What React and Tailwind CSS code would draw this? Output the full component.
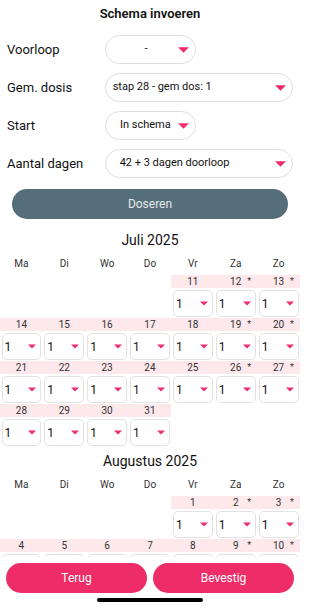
import React from "react";

const font = { fontFamily: "Roboto, 'Liberation Sans', sans-serif" };

function Caret({ w = 11, h = 6 }) {
  return (
    <svg width={w} height={h} viewBox="0 0 10 5" className="shrink-0">
      <polygon points="0,0 10,0 5,5" fill="#ef2d68" />
    </svg>
  );
}

function FieldSelect({ value, wide, align = "left", pl = "pl-[8px]" }) {
  return (
    <div
      className={`${wide ? "w-[189px]" : "w-[91px]"} h-[29px] rounded-[15px] border border-[#dedede] flex items-center pr-[6px] ${pl}`}
    >
      <span
        className={`flex-1 whitespace-nowrap text-[11px] text-[#111] ${align === "center" ? "text-center" : ""}`}
      >
        {value}
      </span>
      <Caret />
    </div>
  );
}

const weekdays = ["Ma", "Di", "Wo", "Do", "Vr", "Za", "Zo"];

function DayCell({ day, col }) {
  if (!day) return <div />;
  const weekend = col >= 5;
  return (
    <div className="flex flex-col">
      <div className="relative h-[13px] bg-[#fde8ec] flex items-center justify-center text-[10px] leading-none text-[#333]">
        {day}
        {weekend && (
          <span className="absolute right-[6px] top-[2px] text-[9px]">*</span>
        )}
      </div>
      <div className="mt-[2px] mx-[1.5px] h-[27px] rounded-[5px] border border-[#e2e2e2] flex items-center pl-[2px] pr-[4px]">
        <span className="flex-1 text-[12px] text-[#111]">1</span>
        <Caret w={8} h={5} />
      </div>
    </div>
  );
}

function Month({ title, offset, from, to, titleMt }) {
  const cells = [];
  for (let i = 0; i < offset; i++) cells.push(null);
  for (let d = from; d <= to; d++) cells.push(d);
  while (cells.length % 7) cells.push(null);
  const weeks = [];
  for (let i = 0; i < cells.length; i += 7) weeks.push(cells.slice(i, i + 7));
  return (
    <div>
      <div className={`${titleMt} text-center text-[14px] leading-[20px] text-[#111]`}>
        {title}
      </div>
      <div className="grid grid-cols-7 mt-[7px]">
        {weekdays.map((w) => (
          <div key={w} className="text-center text-[10px] leading-[14px] text-[#333]">
            {w}
          </div>
        ))}
      </div>
      <div className="mt-[4px] flex flex-col gap-[1px]">
        {weeks.map((wk, i) => (
          <div key={i} className="grid grid-cols-7">
            {wk.map((d, j) => (
              <DayCell key={j} day={d} col={j} />
            ))}
          </div>
        ))}
      </div>
    </div>
  );
}

export default function App() {
  return (
    <div className="relative w-[300px] h-[609px] overflow-hidden bg-white" style={font}>
      {/* Kop */}
      <div className="pt-[5px] text-center text-[13px] leading-[18px] font-semibold text-[#111]">
        Schema invoeren
      </div>

      {/* Invoervelden */}
      <div className="mt-[12px] px-[7px] flex flex-col gap-[9px]">
        <div className="flex items-center">
          <span className="w-[98px] text-[13px] text-[#111]">Voorloop</span>
          <FieldSelect value="-" align="center" />
        </div>
        <div className="flex items-center">
          <span className="w-[98px] text-[13px] text-[#111]">Gem. dosis</span>
          <FieldSelect value="stap 28 - gem dos: 1" wide pl="pl-[7px]" />
        </div>
        <div className="flex items-center">
          <span className="w-[98px] text-[13px] text-[#111]">Start</span>
          <FieldSelect value="In schema" pl="pl-[14px]" />
        </div>
        <div className="flex items-center">
          <span className="w-[98px] text-[13px] text-[#111]">Aantal dagen</span>
          <FieldSelect value="42 + 3 dagen doorloop" wide pl="pl-[14px]" />
        </div>
      </div>

      <div className="mx-[12px] mt-[11px] h-[30px] rounded-full bg-[#546e7a] flex items-center justify-center text-[12px] text-[#e6e9eb]">
        Doseren
      </div>

      <Month title="Juli 2025" offset={4} from={11} to={31} titleMt="mt-[11px]" />
      <Month title="Augustus 2025" offset={4} from={1} to={31} titleMt="mt-[5px]" />

      {/* Onderbalk */}
      <div className="absolute bottom-0 left-0 right-0 h-[52px] bg-white">
        <div className="mt-[6px] px-[6px] flex gap-[6px]">
          <div className="flex-1 h-[30px] rounded-full bg-[#ee2d68] flex items-center justify-center text-[12px] text-white">
            Terug
          </div>
          <div className="flex-1 h-[30px] rounded-full bg-[#ee2d68] flex items-center justify-center text-[12px] text-white">
            Bevestig
          </div>
        </div>
        <div className="mx-auto mt-[5px] w-[106px] h-[4px] rounded-full bg-black" />
      </div>
    </div>
  );
}
